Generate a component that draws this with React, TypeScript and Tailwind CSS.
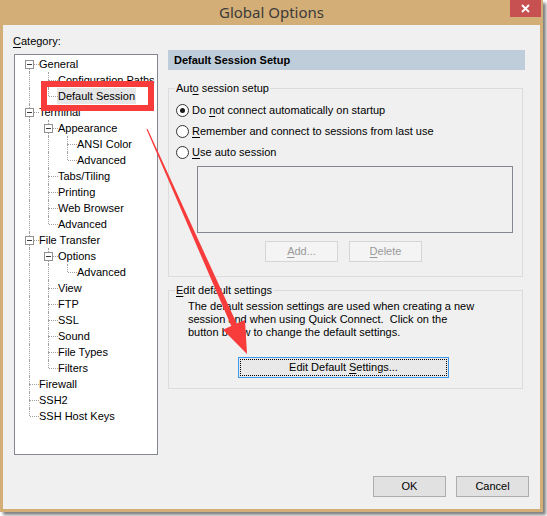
import React from 'react';

interface Node {
  label: string;
  selected?: boolean;
  children?: Node[];
}

interface Row {
  label: string;
  selected?: boolean;
  level: number;
  ancestorsLast: boolean[];
  last: boolean;
  first: boolean;
  hasChildren: boolean;
}

const tree: Node[] = [
  {
    label: 'General',
    children: [{ label: 'Configuration Paths' }, { label: 'Default Session', selected: true }],
  },
  {
    label: 'Terminal',
    children: [
      { label: 'Appearance', children: [{ label: 'ANSI Color' }, { label: 'Advanced' }] },
      { label: 'Tabs/Tiling' },
      { label: 'Printing' },
      { label: 'Web Browser' },
      { label: 'Advanced' },
    ],
  },
  {
    label: 'File Transfer',
    children: [
      { label: 'Options', children: [{ label: 'Advanced' }] },
      { label: 'View' },
      { label: 'FTP' },
      { label: 'SSL' },
      { label: 'Sound' },
      { label: 'File Types' },
      { label: 'Filters' },
    ],
  },
  { label: 'Firewall' },
  { label: 'SSH2' },
  { label: 'SSH Host Keys' },
];

// flatten the tree into rows, remembering which ancestors still have siblings below
const flatten = (nodes: Node[], level: number, ancestorsLast: boolean[], out: Row[]) => {
  nodes.forEach((n, i) => {
    const last = i === nodes.length - 1;
    out.push({
      label: n.label,
      selected: n.selected,
      level,
      ancestorsLast,
      last,
      first: level === 0 && i === 0,
      hasChildren: !!n.children,
    });
    if (n.children) flatten(n.children, level + 1, [...ancestorsLast, last], out);
  });
  return out;
};

const rows = flatten(tree, 0, [], []);

const dots = 'border-dotted border-[#a0a0a0]';

const TreeRow: React.FC<{ row: Row }> = ({ row }) => (
  <div className="flex h-[16px]">
    {row.ancestorsLast.map((l, i) => (
      <span key={i} className="relative w-[19px] shrink-0">
        {!l && <span className={`absolute left-[9px] top-0 h-[16px] border-l ${dots}`} />}
      </span>
    ))}
    <span className="relative w-[19px] shrink-0">
      {!row.first && <span className={`absolute left-[9px] top-0 h-[8px] border-l ${dots}`} />}
      {!row.last && <span className={`absolute left-[9px] top-[8px] h-[8px] border-l ${dots}`} />}
      <span className={`absolute left-[10px] top-[8px] w-[9px] border-t ${dots}`} />
      {row.hasChildren && (
        <span className="absolute left-[5px] top-[4px] w-[9px] h-[9px] border border-[#919191] bg-white">
          <span className="absolute left-[1px] top-[3px] w-[5px] h-[1px] bg-[#3a3a3a]" />
        </span>
      )}
    </span>
    <span
      className={`-ml-[1px] px-[1px] leading-[16px] whitespace-nowrap ${row.selected ? 'bg-[#e6e6e6]' : ''}`}
    >
      {row.label}
    </span>
  </div>
);

const Radio: React.FC<{ checked?: boolean; children: React.ReactNode }> = ({ checked, children }) => (
  <div className="flex items-center h-[21px] pl-[7px] gap-[3px]">
    <span className="w-[13px] h-[13px] rounded-full border border-[#333] bg-white flex items-center justify-center">
      {checked && <span className="w-[5px] h-[5px] rounded-full bg-[#1a1a1a]" />}
    </span>
    <span>{children}</span>
  </div>
);

const u = (s: string) => <span className="underline underline-offset-[2px]">{s}</span>;

export default function App() {
  return (
    <div className="relative w-[547px] h-[516px] bg-white overflow-hidden font-['Liberation_Sans',Arial,sans-serif] text-[11px] text-black">
      <div className="w-[543px] h-[512px] bg-[#d3ae76] shadow-[3px_3px_3px_rgba(0,0,0,0.5)] flex flex-col">
        {/* title bar */}
        <div className="relative h-[25px] flex items-center justify-center">
          <span className="font-['Noto_Sans',sans-serif] text-[15px] text-[#3b3b3b] leading-[20px] -mt-[2px]">
            Global Options
          </span>
          <div className="absolute right-[2px] top-0 w-[31px] h-[17px] bg-[#c75050] flex items-center justify-center">
            <svg width="9" height="9" viewBox="0 0 9 9">
              <path d="M1 1 L8 8 M8 1 L1 8" stroke="white" strokeWidth="1.8" />
            </svg>
          </div>
        </div>

        {/* client area */}
        <div className="mx-[3px] h-[484px] bg-[#f0f0f0] flex flex-col pt-[8px]">
          <div className="flex">
            <div className="flex flex-col w-[145px] ml-[10px]">
              <div className="h-[16px] leading-[16px]">{u('C')}ategory:</div>
              <div className="mt-[5px] ml-[1px] w-[144px] h-[401px] border border-[#828790] bg-white pl-[5px] pt-[1px] overflow-hidden">
                {rows.map((r, i) => (
                  <TreeRow key={i} row={r} />
                ))}
              </div>
            </div>

            <div className="ml-[10px] mt-[17px] w-[357px]">
              <div className="h-[20px] bg-[#bfcddb] pl-[6px] leading-[20px] font-bold">Default Session Setup</div>

              <fieldset className="mt-[11px] w-[355px] border border-[#dcdcdc] pb-[14px]">
                <legend className="ml-[6px] px-[1px] leading-[14px]">
                  Aut{u('o')} session setup
                </legend>
                <div className="pt-[5px]">
                  <Radio checked>Do {u('n')}ot connect automatically on startup</Radio>
                  <Radio>{u('R')}emember and connect to sessions from last use</Radio>
                  <Radio>{u('U')}se auto session</Radio>
                </div>
                <div className="mt-[3px] ml-[28px] w-[316px] h-[67px] border border-[#828790] bg-[#f0f0f0]" />
                <div className="flex mt-[8px] ml-[96px] gap-[11px]">
                  <button className="w-[73px] h-[21px] border border-[#d5d5d5] bg-[#f4f4f4] text-[#9a9a9a]">
                    {u('A')}dd...
                  </button>
                  <button className="w-[73px] h-[21px] border border-[#d5d5d5] bg-[#f4f4f4] text-[#9a9a9a]">
                    {u('D')}elete
                  </button>
                </div>
              </fieldset>

              <fieldset className="mt-[6px] w-[355px] border border-[#dcdcdc] pb-[10px]">
                <legend className="ml-[6px] px-[1px] leading-[14px]">{u('E')}dit default settings</legend>
                <p className="pt-[3px] pl-[19px] leading-[13px] whitespace-nowrap">
                  The default session settings are used when creating a new
                  <br />
                  session and when using Quick Connect.&nbsp; Click on the
                  <br />
                  button below to change the default settings.
                </p>
                <button className="mt-[18px] ml-[69px] w-[211px] h-[21px] border border-[#3c97ee] bg-[#e9e9e9] p-[1px] flex">
                  <span className="flex-1 border border-dotted border-black flex items-center justify-center leading-[15px]">
                    <span>
                      Edit Default {u('S')}ettings...
                    </span>
                  </span>
                </button>
              </fieldset>
            </div>
          </div>

          <div className="flex justify-end gap-[10px] pr-[11px] mt-[21px]">
            <button className="w-[73px] h-[21px] border border-[#adadad] bg-[#e1e1e1]">OK</button>
            <button className="w-[73px] h-[21px] border border-[#adadad] bg-[#e1e1e1]">Cancel</button>
          </div>
        </div>
      </div>

      {/* annotation: red box round the selected item */}
      <div className="absolute left-[41px] top-[81px] w-[113px] h-[30px] border-[6px] border-[#f83b3b] pointer-events-none" />

      {/* annotation: red arrow */}
      <svg className="absolute left-0 top-0 pointer-events-none" width="547" height="516" viewBox="0 0 547 516">
        <polygon
          points="147.5,128.8 236.7,323.6 245,319.9 247,354 223,329.7 231.3,326 146.5,129.2"
          fill="#f83b3b"
        />
      </svg>
    </div>
  );
}
